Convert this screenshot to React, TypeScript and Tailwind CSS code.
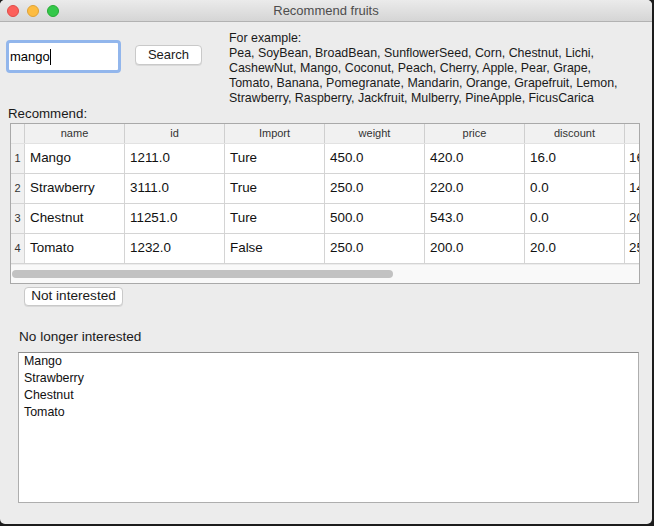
import React from "react";

const rows = [
  { n: 1, name: "Mango", id: "1211.0", imp: "Ture", weight: "450.0", price: "420.0", discount: "16.0", extra: "160.0" },
  { n: 2, name: "Strawberry", id: "3111.0", imp: "True", weight: "250.0", price: "220.0", discount: "0.0", extra: "140.0" },
  { n: 3, name: "Chestnut", id: "11251.0", imp: "Ture", weight: "500.0", price: "543.0", discount: "0.0", extra: "200.0" },
  { n: 4, name: "Tomato", id: "1232.0", imp: "False", weight: "250.0", price: "200.0", discount: "20.0", extra: "250.0" },
];

const headers = ["name", "id", "Import", "weight", "price", "discount", ""];

export default function App() {
  return (
    <div
      className="w-[654px] h-[526px] bg-[#1c1c1c] overflow-hidden"
      style={{ fontFamily: '"Liberation Sans", Arial, sans-serif' }}
    >
      <div className="w-[652px] h-[524px] bg-[#ececec] rounded-[5px] overflow-hidden flex flex-col">
        {/* Title bar */}
        <div className="relative h-[22px] shrink-0 bg-gradient-to-b from-[#ebebeb] to-[#d5d5d5] border-b border-[#b2b2b2] flex items-center">
          <div className="flex items-center gap-[8px] pl-[7px]">
            <div className="w-[12px] h-[12px] rounded-full bg-[#fc605b] border border-[#de4c48]" />
            <div className="w-[12px] h-[12px] rounded-full bg-[#fdbc40] border border-[#dea236]" />
            <div className="w-[12px] h-[12px] rounded-full bg-[#34c84a] border border-[#27aa35]" />
          </div>
          <div className="absolute inset-0 flex items-center justify-center text-[13px] text-[#4d4d4d]">
            Recommend fruits
          </div>
        </div>

        {/* Top row */}
        <div className="flex items-start">
          <div className="ml-[6px] mt-[18px] w-[115px] h-[33px] rounded-[4px] border-[3px] border-[#92b6ec] bg-white flex items-center">
            <span className="pl-[1px] text-[13px] text-black leading-none">mango</span>
            <span className="w-[1px] h-[16px] bg-black" />
          </div>
          <div className="ml-[14px] mt-[23px] w-[67px] h-[20px] rounded-[4px] bg-white border border-[#c9c9c9] shadow-[0_1px_0_rgba(0,0,0,0.08)] flex items-center justify-center text-[13px] text-[#1a1a1a]">
            Search
          </div>
          <div className="ml-[27px] mt-[9px] text-[12.4px] leading-[15px] text-[#1a1a1a]">
            <div>For example:</div>
            <div>Pea, SoyBean, BroadBean, SunflowerSeed, Corn, Chestnut, Lichi,</div>
            <div>CashewNut, Mango, Coconut, Peach, Cherry, Apple, Pear, Grape,</div>
            <div>Tomato, Banana, Pomegranate, Mandarin, Orange, Grapefruit, Lemon,</div>
            <div>Strawberry, Raspberry, Jackfruit, Mulberry, PineApple, FicusCarica</div>
          </div>
        </div>

        {/* Recommend label */}
        <div className="ml-[8px] h-[16px] leading-[16px] text-[13.3px] text-[#1a1a1a]">Recommend:</div>

        {/* Table */}
        <div className="ml-[10px] mt-[1px] w-[630px] h-[161px] border border-[#a9a9a9] bg-white overflow-hidden flex flex-col">
          <div className="flex h-[20px] bg-[#f1f1f1] border-b border-[#e2e2e2] shrink-0">
            <div className="w-[14px] shrink-0 border-r border-[#cfcfcf]" />
            {headers.map((h, i) => (
              <div
                key={i}
                className="w-[100px] shrink-0 border-r border-[#cfcfcf] flex items-center justify-center text-[11px] text-[#333]"
              >
                {h}
              </div>
            ))}
          </div>
          {rows.map((r) => (
            <div key={r.n} className="flex h-[30px] shrink-0 border-b border-[#d4d4d4]">
              <div className="w-[14px] shrink-0 bg-[#f1f1f1] border-r border-[#d4d4d4] flex items-center justify-center text-[11px] text-[#333]">
                {r.n}
              </div>
              {[r.name, r.id, r.imp, r.weight, r.price, r.discount].map((c, i) => (
                <div
                  key={i}
                  className="w-[100px] shrink-0 border-r border-[#d4d4d4] flex items-center pl-[5px] text-[13.4px] text-[#111]"
                >
                  {c}
                </div>
              ))}
              <div className="w-[100px] shrink-0 flex items-center pl-[4px] text-[13.4px] text-[#111] overflow-hidden">
                <span className="w-[10px] overflow-hidden whitespace-nowrap">{r.extra}</span>
              </div>
            </div>
          ))}
          <div className="flex-1 bg-[#f9f9f9] border-t border-[#ececec] flex items-center">
            <div className="ml-[1px] w-[381px] h-[8px] rounded-full bg-[#c2c2c2]" />
          </div>
        </div>

        {/* Not interested button */}
        <div className="ml-[24px] mt-[3px] w-[99px] h-[19px] rounded-[4px] bg-white border border-[#c9c9c9] shadow-[0_1px_0_rgba(0,0,0,0.08)] flex items-center justify-center text-[13.6px] text-[#1a1a1a]">
          Not interested
        </div>

        <div className="ml-[19px] mt-[23px] h-[16px] leading-[16px] text-[13.6px] text-[#1a1a1a]">
          No longer interested
        </div>

        <div className="ml-[18px] mt-[7px] w-[621px] h-[151px] bg-white border border-[#aeaeae] border-t-[#8f8f8f] pl-[5px] text-[12.4px] leading-[17px] text-[#111]">
          <div>Mango</div>
          <div>Strawberry</div>
          <div>Chestnut</div>
          <div>Tomato</div>
        </div>
      </div>
    </div>
  );
}
